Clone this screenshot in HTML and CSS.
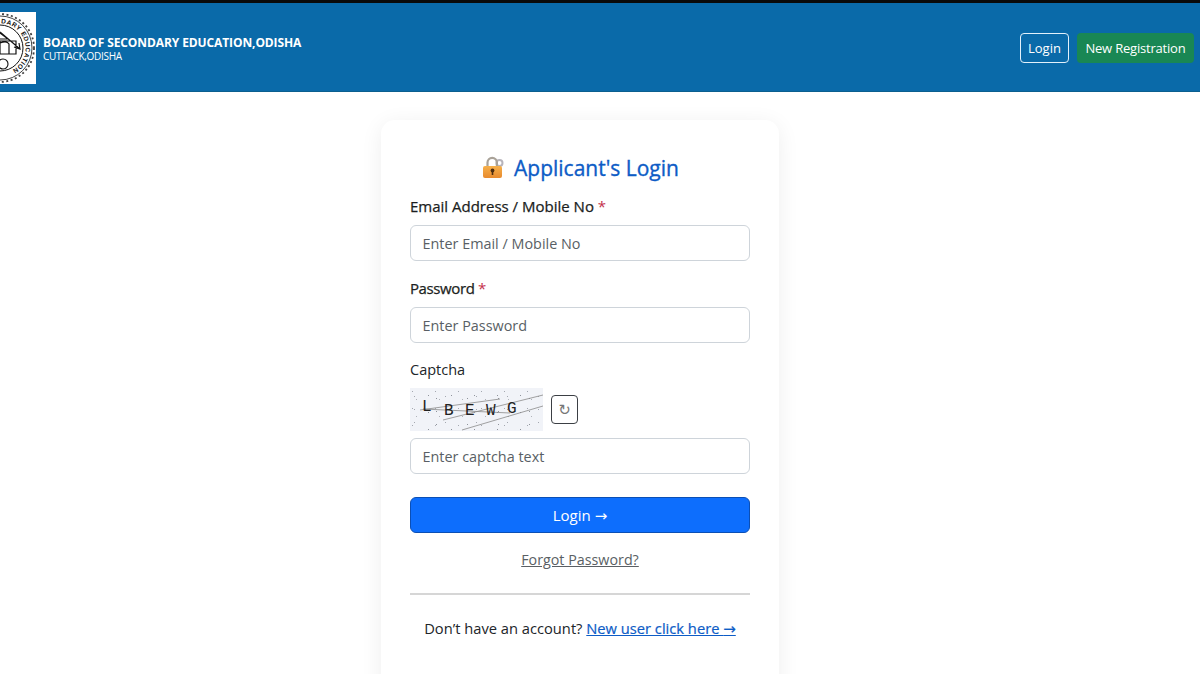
FILE: index.html
```html
<!DOCTYPE html>
<html lang="en">
<head>
<meta charset="utf-8">
<title>Applicant's Login</title>
<link rel="stylesheet" href="styles.css">
</head>
<body>
<header class="topbar">
  <div class="brand">
    <div class="logo-box">
      <svg class="logo" width="72" height="72" viewBox="0 0 72 72" fill="none" stroke="#111">
        <defs>
          <path id="seal-arc" d="M37 11.500A24.500 24.500 0 0 1 37 60.500"/>
        </defs>
        <circle cx="36" cy="36" r="34" stroke-width="1.800" stroke-dasharray="2 2.500" opacity=".8"/>
        <circle cx="36" cy="36" r="32" stroke-width=".8"/>
        <circle cx="36" cy="36" r="23" stroke-width="1"/>
        <text class="seal-text"><textPath href="#seal-arc">DARY EDUCATION</textPath></text>
        <path d="M36 21l8 6M36 27h8M36 29h16v13H36zM36 31c5-2 8-1 9 1v10M36 20l20 17M50 35l6 2-1-6" stroke-width="1.200"/>
        <circle cx="39" cy="52" r="5" stroke-width="1.100"/>
      </svg>
    </div>
    <div class="brand-text">
      <div class="brand-title">BOARD OF SECONDARY EDUCATION,ODISHA</div>
      <div class="brand-sub">CUTTACK,ODISHA</div>
    </div>
  </div>
  <nav class="top-actions">
    <a class="btn-outline">Login</a>
    <a class="btn-green">New Registration</a>
  </nav>
</header>
<main class="page">
  <section class="card">
    <h1 class="card-title">
      <svg class="lock" width="24" height="24" viewBox="0 0 24 24">
        <defs>
          <linearGradient id="lock-body" x1="0" y1="0" x2="0" y2="1">
            <stop offset="0" stop-color="#f6b04a"/>
            <stop offset="1" stop-color="#e88a2e"/>
          </linearGradient>
        </defs>
        <circle cx="18.500" cy="7" r="3" fill="none" stroke="#b7b4bb" stroke-width="2"/>
        <path d="M6.500 11V6.500a4.700 4.700 0 0 1 9.400 0V11" fill="none" stroke="#a9a298" stroke-width="2.200"/>
        <rect x="2" y="10" width="19" height="12" rx="2" fill="url(#lock-body)"/>
        <circle cx="11.500" cy="14.500" r="1.900" fill="#4d2c10"/>
        <rect x="10.700" y="14.500" width="1.600" height="4.500" fill="#4d2c10"/>
      </svg>
      <span>Applicant's Login</span>
    </h1>
    <form class="form">
      <div class="field field-first">
        <label class="label-strong">Email Address / Mobile No <span class="req">*</span></label>
        <input class="input" type="text" placeholder="Enter Email / Mobile No">
      </div>
      <div class="field">
        <label class="label-strong label-tight">Password <span class="req">*</span></label>
        <input class="input" type="text" placeholder="Enter Password">
      </div>
      <div class="field captcha-field">
        <label class="label-plain">Captcha</label>
        <div class="captcha-row">
          <svg class="captcha" width="133" height="43" viewBox="0 0 133 43">
            <defs>
              <pattern id="noise" width="23" height="17" patternUnits="userSpaceOnUse">
                <rect x="2" y="3" width="1" height="1" fill="#a4a8b0"/>
                <rect x="18" y="7" width="1" height="1" fill="#8f939b"/>
                <rect x="6" y="11" width="1" height="1" fill="#b0b3ba"/>
              </pattern>
              <pattern id="noise-b" width="31" height="13" patternUnits="userSpaceOnUse">
                <rect x="4" y="8" width="1" height="1" fill="#a4a8b0"/>
                <rect x="26" y="10" width="1" height="1" fill="#8f939b"/>
              </pattern>
            </defs>
            <rect width="133" height="43" fill="#f1f3f8"/>
            <rect width="133" height="43" fill="url(#noise)"/>
            <rect width="133" height="43" fill="url(#noise-b)"/>
            <path d="M10 22L90 11M33 32L133 7M52 42L133 18M13 21L100 25" stroke="#8a8a8a" stroke-width=".8" fill="none"/>
            <g class="captcha-text">
              <text x="12" y="23">L</text>
              <text x="34" y="27">B</text>
              <text x="55" y="27">E</text>
              <text x="76" y="27">W</text>
              <text x="97" y="25">G</text>
            </g>
          </svg>
          <button class="refresh" type="button">↻</button>
        </div>
        <input class="input" type="text" placeholder="Enter captcha text">
      </div>
      <button class="btn-primary" type="button">Login <span class="arrow">→</span></button>
    </form>
    <div class="forgot"><a>Forgot Password?</a></div>
    <hr class="divider">
    <p class="signup">Don’t have an account? <a>New user click here <span class="arrow">→</span></a></p>
  </section>
</main>
</body>
</html>
```

FILE: styles.css
```css
* { box-sizing: border-box; }
html, body { margin: 0; height: 674px; overflow: hidden; }
body {
  font-family: "Open Sans", "Noto Sans", sans-serif;
  background: #fff;
  color: #212529;
  border-top: 3px solid #0a0a0a;
}
.topbar {
  height: 89px;
  background: #0a6aa9;
  border-bottom: 1px solid #0b5f8f;
  display: flex;
  align-items: center;
  justify-content: space-between;
  padding: 2px 6px 0 0;
}
.brand { display: flex; align-items: center; gap: 7px; }
.logo-box {
  width: 36px;
  height: 72px;
  background: #fff;
  overflow: hidden;
  display: flex;
  justify-content: flex-end;
}
.logo { flex: none; }
.seal-text { font: 700 6.500px "Liberation Sans", sans-serif; fill: #111; stroke: none; letter-spacing: .5px; }
.brand-text { color: #fff; margin-top: 1px; }
.brand-title { font-size: 12px; font-weight: 700; line-height: 15px; letter-spacing: -.1px; }
.brand-sub { font-size: 10px; line-height: 13px; letter-spacing: -.3px; }
.top-actions { display: flex; align-items: center; gap: 8px; }
.btn-outline, .btn-green {
  height: 30px;
  display: flex;
  align-items: center;
  font-size: 13px;
  color: #fff;
  border-radius: 4px;
}
.btn-outline { padding: 0 7px; border: 1px solid #e3f1fb; }
.btn-green { padding: 0 8.500px; background: #198754; letter-spacing: -.2px; }
.page {
  display: flex;
  justify-content: center;
  height: 582px;
  overflow: hidden;
  padding: 28px 40px 0 0;
}
.card {
  flex: none;
  width: 398px;
  height: 600px;
  background: #fff;
  border-radius: 14px;
  box-shadow: 0 4px 22px rgba(0, 0, 0, .07);
  padding: 30px 29px;
}
.card-title {
  margin: 0 0 10px;
  display: flex;
  justify-content: center;
  align-items: center;
  gap: 9px;
  font-size: 21px;
  font-weight: 500;
  line-height: 36px;
  color: #0d5cc6;
  height: 36px;
  -webkit-text-stroke: .35px #0d5cc6;
}
.field { margin-bottom: 17px; }
.label-strong, .label-plain { display: block; font-size: 15px; line-height: 20px; color: #212529; }
.label-strong { margin-bottom: 9px; font-weight: 500; color: #1b1e21; -webkit-text-stroke: .25px #1b1e21; }
.label-tight { letter-spacing: -.4px; }
.label-plain { margin-bottom: 8px; font-size: 14.500px; }
.req { color: #c4314b; -webkit-text-stroke: 0; }
.input {
  display: block;
  width: 100%;
  height: 36px;
  padding: 0 11.500px;
  font: 14.400px "Open Sans", "Noto Sans", sans-serif;
  border: 1px solid #ced4da;
  border-radius: 6px;
  background: #fff;
}
.input::placeholder { color: #595f65; opacity: 1; }
.captcha-field { margin-bottom: 23px; }
.captcha-row { display: flex; align-items: center; gap: 8px; margin-bottom: 7px; }
.captcha { display: block; flex: none; }
.captcha-text text { font: 16px "Liberation Mono", monospace; fill: #222; }
.refresh {
  width: 27px;
  height: 29px;
  padding: 0;
  background: #fff;
  border: 1px solid #3b3f44;
  border-radius: 4px;
  color: #777;
  font: 15px "DejaVu Sans", sans-serif;
}
.btn-primary {
  display: block;
  width: 100%;
  height: 36px;
  background: #0d6efd;
  color: #fff;
  border: 1px solid #0b4fb5;
  border-radius: 6px;
  font: 15px "Open Sans", "Noto Sans", sans-serif;
}
.arrow { font-family: "DejaVu Sans", sans-serif; font-size: 15px; line-height: 1; }
.forgot { text-align: center; margin-top: 17px; font-size: 14.300px; line-height: 20px; }
.forgot a { color: #5a5f64; text-decoration: underline; }
.divider { border: 0; border-top: 2px solid #d6d6d6; margin: 23px 0 23px; }
.signup { margin: 0; text-align: center; font-size: 14.700px; line-height: 20px; color: #212529; }
.signup a { color: #0d5cc6; text-decoration: underline; font-weight: 500; -webkit-text-stroke: .2px #0d5cc6; }
```
